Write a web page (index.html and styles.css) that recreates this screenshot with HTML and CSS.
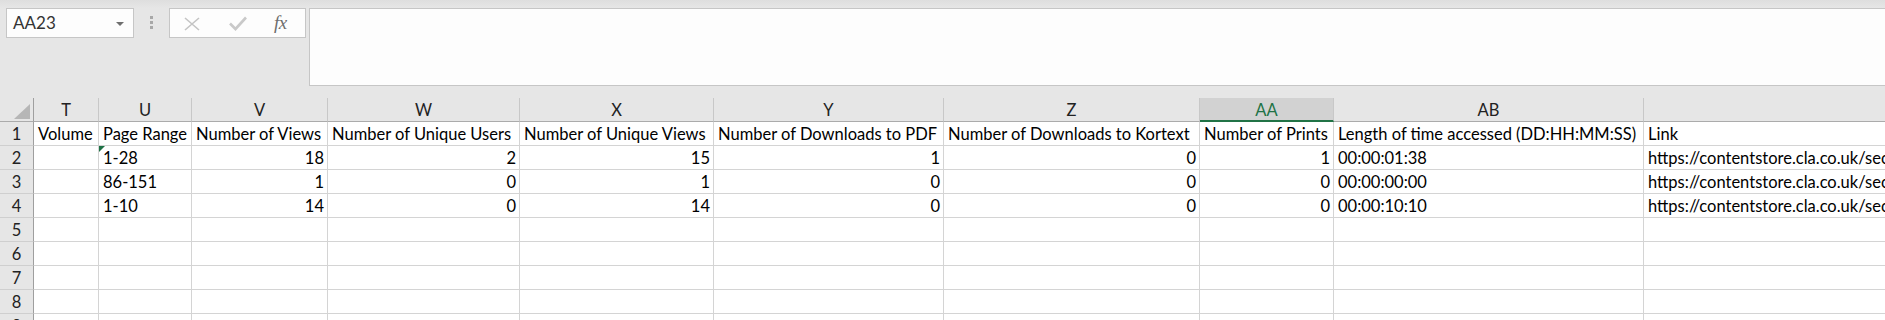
FILE: index.html
```html
<!DOCTYPE html>
<html lang="en">
<head>
<meta charset="utf-8">
<title>Sheet</title>
<link rel="stylesheet" href="styles.css">
</head>
<body>
<div class="app">
  <div class="toolbar">
    <div class="namebox">
      <span class="name">AA23</span>
      <svg class="drop" width="8" height="4" viewBox="0 0 8 4"><polygon points="0,0 8,0 4,4" fill="#6f6f6f"/></svg>
    </div>
    <div class="grip"><i></i><i></i><i></i></div>
    <div class="fbtns">
      <svg class="ic-x" width="16" height="14" viewBox="0 0 16 14"><path d="M1 1 L15 13 M15 1 L1 13" stroke="#c4c4c4" stroke-width="1.6" fill="none"/></svg>
      <svg class="ic-check" width="18" height="15" viewBox="0 0 18 15"><polyline points="1,7.5 6.5,13 17,1.5" stroke="#c9c9c9" stroke-width="2.6" fill="none"/></svg>
      <span class="fx">fx</span>
    </div>
    <div class="fbar"></div>
  </div>

  <div class="sheet">
    <div class="h corner"><svg width="16" height="15" viewBox="0 0 16 15"><polygon points="16,0 16,15 0,15" fill="#b6b6b6"/></svg></div>
    <div class="h">T</div>
    <div class="h">U</div>
    <div class="h">V</div>
    <div class="h">W</div>
    <div class="h">X</div>
    <div class="h">Y</div>
    <div class="h">Z</div>
    <div class="h sel">AA</div>
    <div class="h">AB</div>
    <div class="h"></div>

    <div class="r">1</div>
    <div class="c">Volume</div>
    <div class="c">Page Range</div>
    <div class="c">Number of Views</div>
    <div class="c">Number of Unique Users</div>
    <div class="c">Number of Unique Views</div>
    <div class="c">Number of Downloads to PDF</div>
    <div class="c">Number of Downloads to Kortext</div>
    <div class="c">Number of Prints</div>
    <div class="c">Length of time accessed (DD:HH:MM:SS)</div>
    <div class="c">Link</div>

    <div class="r">2</div>
    <div class="c"></div>
    <div class="c flag">1-28</div>
    <div class="c n">18</div>
    <div class="c n">2</div>
    <div class="c n">15</div>
    <div class="c n">1</div>
    <div class="c n">0</div>
    <div class="c n">1</div>
    <div class="c">00:00:01:38</div>
    <div class="c">https://contentstore.cla.co.uk/secure-link/1</div>

    <div class="r">3</div>
    <div class="c"></div>
    <div class="c">86-151</div>
    <div class="c n">1</div>
    <div class="c n">0</div>
    <div class="c n">1</div>
    <div class="c n">0</div>
    <div class="c n">0</div>
    <div class="c n">0</div>
    <div class="c">00:00:00:00</div>
    <div class="c">https://contentstore.cla.co.uk/secure-link/2</div>

    <div class="r">4</div>
    <div class="c"></div>
    <div class="c">1-10</div>
    <div class="c n">14</div>
    <div class="c n">0</div>
    <div class="c n">14</div>
    <div class="c n">0</div>
    <div class="c n">0</div>
    <div class="c n">0</div>
    <div class="c">00:00:10:10</div>
    <div class="c">https://contentstore.cla.co.uk/secure-link/3</div>

    <div class="r">5</div>
    <div class="c"></div><div class="c"></div><div class="c"></div><div class="c"></div><div class="c"></div><div class="c"></div><div class="c"></div><div class="c"></div><div class="c"></div><div class="c"></div>
    <div class="r">6</div>
    <div class="c"></div><div class="c"></div><div class="c"></div><div class="c"></div><div class="c"></div><div class="c"></div><div class="c"></div><div class="c"></div><div class="c"></div><div class="c"></div>
    <div class="r">7</div>
    <div class="c"></div><div class="c"></div><div class="c"></div><div class="c"></div><div class="c"></div><div class="c"></div><div class="c"></div><div class="c"></div><div class="c"></div><div class="c"></div>
    <div class="r">8</div>
    <div class="c"></div><div class="c"></div><div class="c"></div><div class="c"></div><div class="c"></div><div class="c"></div><div class="c"></div><div class="c"></div><div class="c"></div><div class="c"></div>
    <div class="r">9</div>
    <div class="c"></div><div class="c"></div><div class="c"></div><div class="c"></div><div class="c"></div><div class="c"></div><div class="c"></div><div class="c"></div><div class="c"></div><div class="c"></div>
  </div>
</div>
</body>
</html>
```

FILE: styles.css
```css
html, body {
  margin: 0;
  padding: 0;
  background: #e6e6e6;
  overflow: hidden;
}

.app {
  width: 1885px;
  height: 320px;
  overflow: hidden;
  font-family: Lato, "Liberation Sans", Arial, sans-serif;
}

.toolbar {
  height: 98px;
  box-sizing: border-box;
  padding: 8px 0 0 6px;
  display: flex;
  align-items: flex-start;
  background: linear-gradient(#dedede 0, #e6e6e6 8px);
}

.namebox {
  width: 128px;
  height: 30px;
  box-sizing: border-box;
  border: 1px solid #c6c6c6;
  background: #fdfdfd;
  display: flex;
  align-items: center;
  justify-content: space-between;
  padding: 0 9px 0 6px;
}

.name {
  font-size: 17px;
  color: #333;
  line-height: 18px;
}

.drop {
  display: block;
  margin-top: 1px;
}

.grip {
  width: 3px;
  margin: 8px 16px 0 16px;
  display: flex;
  flex-direction: column;
  gap: 2px;
}

.grip i {
  display: block;
  width: 3px;
  height: 3px;
  background: #a8a8a8;
}

.fbtns {
  width: 137px;
  height: 30px;
  box-sizing: border-box;
  border: 1px solid #c6c6c6;
  background: #fdfdfd;
  display: flex;
  align-items: center;
  padding-left: 14px;
}

.ic-x {
  display: block;
  margin-top: 1px;
}

.ic-check {
  display: block;
  margin-left: 29px;
  margin-top: 1px;
}

.fx {
  margin-left: 27px;
  font-family: "Liberation Serif", "Times New Roman", serif;
  font-style: italic;
  font-size: 19px;
  line-height: 18px;
  color: #6e6e6e;
  letter-spacing: -0.5px;
}

.fbar {
  flex: 1;
  margin-left: 3px;
  height: 78px;
  box-sizing: border-box;
  border: 1px solid #c6c6c6;
  border-right: none;
  background: #fdfdfd;
}

.sheet {
  display: grid;
  grid-template-columns: 34px 65px 93px 136px 192px 194px 230px 256px 134px 310px 420px;
  grid-auto-rows: 24px;
  background: #fff;
  width: 2064px;
}

.sheet > div {
  box-sizing: border-box;
  white-space: nowrap;
  overflow: hidden;
  font-size: 16.5px;
  line-height: 18px;
  display: flex;
}

.h {
  background: #e6e6e6;
  border-right: 1px solid #c8c8c8;
  border-bottom: 1px solid #ababab;
  align-items: center;
  justify-content: center;
  color: #222;
}

.corner {
  border-right: 1px solid #9f9f9f;
  align-items: flex-end;
  justify-content: flex-end;
  padding: 0 3px 2px 0;
}

.corner svg {
  display: block;
}

.sel {
  background: #d2d2d2;
  color: #217346;
  border-bottom: 2px solid #217346;
  padding-top: 1px;
}

.r {
  background: #e6e6e6;
  border-right: 1px solid #9f9f9f;
  border-bottom: 1px solid #cfcfcf;
  align-items: center;
  justify-content: center;
  color: #222;
}

.c {
  border-right: 1px solid #d4d4d4;
  border-bottom: 1px solid #d4d4d4;
  align-items: flex-end;
  padding: 0 3px 2px 4px;
  color: #000;
}

.n {
  justify-content: flex-end;
}

.flag {
  position: relative;
}

.flag::before {
  content: "";
  position: absolute;
  top: 0;
  left: 0;
  width: 0;
  height: 0;
  border-top: 6px solid #1e7145;
  border-right: 6px solid transparent;
}
```
